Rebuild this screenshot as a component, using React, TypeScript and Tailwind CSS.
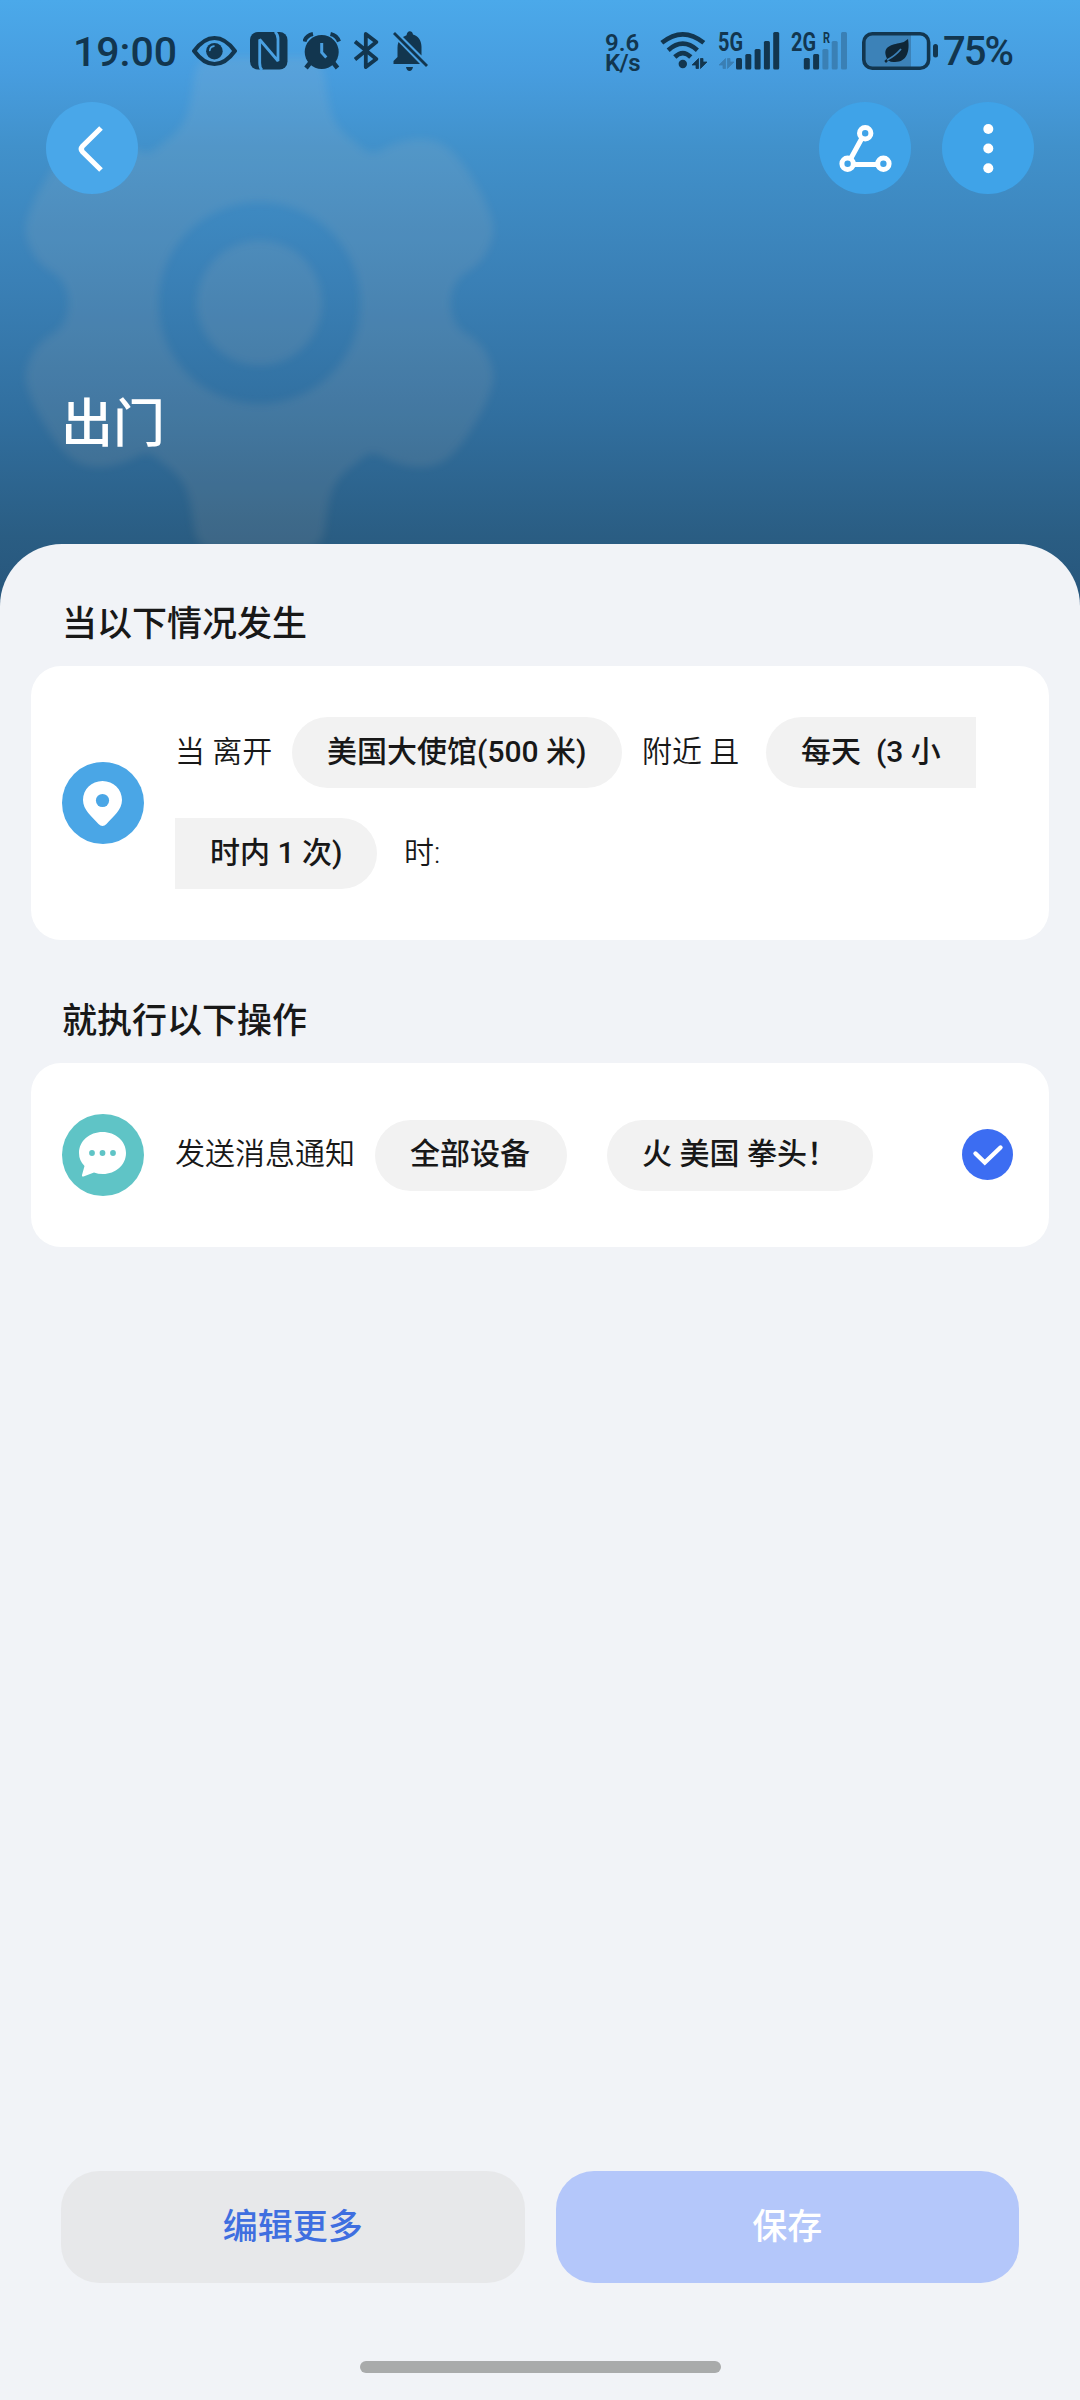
import clsx from "clsx";
import type { ReactNode } from "react";

const INK = "#12364f";

function EyeIcon() {
  return (
    <svg width="45" height="40" viewBox="0 0 45 40" fill="none">
      <path d="M2.2 20C9 10.5 15 7 22.5 7S36 10.5 42.8 20C36 29.5 30 33 22.5 33S9 29.5 2.2 20Z" stroke={INK} strokeWidth="4.2" />
      <circle cx="22.4" cy="20.2" r="8.3" fill={INK} />
      <path d="M17.8 19.5a4.8 4.8 0 0 1 4.2-4.4" stroke="#4aa2e2" strokeWidth="1.6" strokeLinecap="round" />
    </svg>
  );
}

function NfcIcon() {
  return (
    <svg width="38" height="40" viewBox="0 0 38 40" fill="none">
      <rect y="1" width="37.5" height="37.5" rx="8" fill={INK} />
      <path d="M12 39C10 37 9.7 35 9.7 32V8.500L28 30V8C28 5 27.500 3 25 .8" stroke="#4aa1e2" strokeWidth="2.8" strokeLinejoin="bevel" />
    </svg>
  );
}

function AlarmIcon() {
  return (
    <svg width="38" height="40" viewBox="0 0 38 40" fill="none">
      <circle cx="18.7" cy="21" r="17" fill={INK} />
      <path d="M1.5 10.5Q3 4.5 10 3M27.5 3Q34 4.5 36 10.5" stroke={INK} strokeWidth="4" />
      <path d="M7 32l-4 5M30.5 32l4 5" stroke={INK} strokeWidth="4.5" />
      <path d="M18.7 12v9.500l4.600 5" stroke="#4a9fe0" strokeWidth="3" />
    </svg>
  );
}

function BluetoothIcon() {
  return (
    <svg width="26" height="40" viewBox="0 0 26 40" fill="none" stroke={INK} strokeWidth="3.8" strokeLinejoin="round">
      <path d="M1 10.5L22.3 28L11.8 36V3L22.3 11L1 28.5" />
    </svg>
  );
}

function BellOffIcon() {
  return (
    <svg width="36" height="40" viewBox="0 0 36 40" fill="none">
      <path d="M13.5 4.2Q14.3 .3 16.8 .3T20 3.500C25.500 5 28.500 10 28.500 16V24.500L10 6Z" fill={INK} />
      <path d="M5.5 11L27 33H.5V30L4.500 26V17Q4.500 13.500 5.500 11Z" fill={INK} />
      <path d="M1 2L34 35" stroke={INK} strokeWidth="2.8" />
      <path d="M13 36h7q-.8 4-3.500 4T13 36Z" fill={INK} />
    </svg>
  );
}

function DataArrows({ x, color }: { x: number; color: string }) {
  return (
    <path
      transform={`translate(${x} 27.500)`}
      d="M6.500 0V10H4V6.500H0ZM8.500 10V0H11V3.500H15Z"
      fill={color}
      stroke={color}
      strokeWidth="0.8"
      strokeLinejoin="round"
    />
  );
}

function WifiIcon() {
  return (
    <svg width="48" height="40" viewBox="0 0 48 40" fill="none">
      <g stroke={INK} strokeWidth="4.6">
        <path d="M1.8 11.8Q22.8-5.2 43.800 11.800" />
        <path d="M8.2 19.2Q22.8 6.2 37.4 19.2" />
        <path d="M14.8 26Q22.8 18.2 30.8 26" />
      </g>
      <circle cx="22.8" cy="33" r="4.2" fill={INK} />
      <DataArrows x={32} color={INK} />
    </svg>
  );
}

const BARS = [
  { y: 27, h: 11.5 },
  { y: 23, h: 15.5 },
  { y: 18, h: 20.5 },
  { y: 10, h: 28.5 },
  { y: 1, h: 37.5 },
];

function Signal({ label, active, roaming }: { label: string; active: number; roaming?: boolean }) {
  return (
    <svg width="62" height="40" viewBox="0 0 62 40" className="overflow-visible">
      <text x="0" y="19.5" fontSize="25" fontWeight="700" fill={INK} textLength="25" lengthAdjust="spacingAndGlyphs">{label}</text>
      {roaming ? (
        <text x="32" y="11.5" fontSize="14" fontWeight="700" fill={INK} textLength="7" lengthAdjust="spacingAndGlyphs">R</text>
      ) : (
        <DataArrows x={1} color="#3a7fb4" />
      )}
      {BARS.map((b, i) => (
        <rect key={i} x={(roaming ? 12.8 : 18) + i * 9.3} y={b.y} width="6" height={b.h} rx="1.5" fill={i < active ? INK : "#3a80b5"} />
      ))}
    </svg>
  );
}

function BatteryIcon() {
  return (
    <svg width="77" height="40" viewBox="0 0 77 40" fill="none">
      <path d="M9 3H49V37H9Q2 37 2 30V10Q2 3 9 3Z" fill="#3c82b8" />
      <rect x="1.8" y="2.8" width="64.8" height="34.5" rx="8.5" stroke={INK} strokeWidth="3.6" />
      <rect x="71" y="13" width="5" height="13.5" rx="2.5" fill={INK} />
      <path d="M46 8C48 20 45 31 33 31Q29 31.500 26.500 29.500L24 32L22.300 30L25 27.500C19 15 31 13.500 38 12Q43 11 46 8Z" fill="#0f2636" />
      <path d="M25 29Q33 25 39 18" stroke="#3c82b8" strokeWidth="1.8" />
    </svg>
  );
}

function StatusBar() {
  return (
    <div className="flex h-[102px] items-center pl-[73px] pr-[66px] text-[#12364f]">
      <span className="w-[119px] pt-[2px] text-[41px] font-medium leading-none">19:00</span>
      <EyeIcon />
      <div className="ml-[13px]"><NfcIcon /></div>
      <div className="ml-[15px]"><AlarmIcon /></div>
      <div className="ml-[13px]"><BluetoothIcon /></div>
      <div className="ml-[13px]"><BellOffIcon /></div>
      <div className="ml-auto flex items-center">
        <div className="w-[55px] pt-[3px] text-[24px] font-semibold leading-[20px]">
          <p>9.6</p>
          <p className="tracking-[-0.6px]">K/s</p>
        </div>
        <WifiIcon />
        <div className="ml-[10px]"><Signal label="5G" active={5} /></div>
        <div className="ml-[11px]"><Signal label="2G" active={2} roaming /></div>
        <div className="ml-[9px]"><BatteryIcon /></div>
        <span className="ml-[4px] w-[71px] whitespace-nowrap pt-[2px] text-[40px] font-medium leading-none tracking-[-2px]">75%</span>
      </div>
    </div>
  );
}

function GearBackdrop() {
  return (
    <svg className="absolute left-0 top-0 h-[600px] w-[520px] blur-[4px]" viewBox="0 0 520 600">
      <defs>
        <path
          id="gear-side"
          d="M0-246H48Q64-244 66-222C69-198 72-186 77-179Q84-168 97-160C106-151 112-149 118-151Q138-163 158-164Q180-165 194-150Q205-138 212-126Q230-98 234-76Q234-60 223-44Q214-34 204-29Q191-18 191 0Q191 18 204 29Q214 34 223 44Q234 60 234 76Q230 98 212 126Q205 138 194 150Q180 165 158 164Q138 163 118 151C112 149 106 151 97 160Q84 168 77 179C72 186 69 198 66 222Q64 244 48 246H0V101A101 101 0 0 0 0-101Z"
        />
      </defs>
      <g transform="translate(259.5 303)" fill="#ffd8b4" fillOpacity="0.092">
        <use href="#gear-side" />
        <use href="#gear-side" transform="scale(-1 1)" />
        <circle r="62.5" />
      </g>
    </svg>
  );
}

function RoundButton({ className, children }: { className?: string; children: ReactNode }) {
  return (
    <button className={clsx("flex size-[92px] items-center justify-center rounded-full", className)}>
      {children}
    </button>
  );
}

function NavBar() {
  return (
    <div className="flex items-center px-[46px]">
      <RoundButton className="bg-[#49a7e9]">
        <svg width="92" height="92" viewBox="0 0 92 92" fill="none" stroke="#fff" strokeWidth="5.2">
          <path d="M55 26L36.5 44.2Q34 47 36.500 49.800L55 68" />
        </svg>
      </RoundButton>
      <RoundButton className="ml-auto bg-[#3fa3e8]">
        <svg width="92" height="92" viewBox="0 0 92 92" fill="none" stroke="#fff" strokeWidth="5">
          <circle cx="46.2" cy="31.2" r="5.7" />
          <circle cx="28.6" cy="61.7" r="5.7" />
          <circle cx="64.4" cy="61.7" r="5.7" />
          <path d="M43 36L31.8 56.5M34.5 62.5H58.5" />
        </svg>
      </RoundButton>
      <RoundButton className="ml-[31px] bg-[#3fa3e8]">
        <svg width="92" height="92" viewBox="0 0 92 92" fill="#fff">
          <circle cx="46.3" cy="27" r="5" />
          <circle cx="46.3" cy="46.5" r="5" />
          <circle cx="46.3" cy="66.3" r="5" />
        </svg>
      </RoundButton>
    </div>
  );
}

function Pill({ className, children }: { className?: string; children: ReactNode }) {
  return (
    <span className={clsx("flex h-[71px] items-center whitespace-pre bg-[#f2f2f2] pb-[3px] pl-[35px] font-medium", className)}>
      {children}
    </span>
  );
}

function Label({ className, children }: { className?: string; children: ReactNode }) {
  return <span className={clsx("pb-[3px] font-[350]", className)}>{children}</span>;
}

function LocationIcon() {
  return (
    <svg width="82" height="82" viewBox="0 0 82 82" className="shrink-0">
      <circle cx="41" cy="41" r="41" fill="#4aa6e6" />
      <path d="M40.5 19C51.500 19 60 27.500 60 38C60 48 51 54.500 44.500 62Q40.500 66 36.500 62C30 54.500 21 48 21 38C21 27.500 29.500 19 40.500 19Z" fill="#fff" />
      <circle cx="40.5" cy="38.5" r="6.6" fill="#4aa6e6" />
    </svg>
  );
}

function MessageIcon() {
  return (
    <svg width="82" height="82" viewBox="0 0 82 82" className="shrink-0">
      <circle cx="41" cy="41" r="41" fill="#5fc4c6" />
      <path d="M40.5 18C53.500 18 64 27 64 39C64 51 53.500 60 41 60Q36 60 32 58.500L21.500 62.500Q19.500 63 20 61L22.500 52Q17 46.500 17 39C17 27 27.500 18 40.500 18Z" fill="#fff" />
      <g fill="#5fc4c6">
        <circle cx="30" cy="39" r="2.9" />
        <circle cx="40.5" cy="39" r="2.9" />
        <circle cx="51" cy="39" r="2.9" />
      </g>
    </svg>
  );
}

function CheckIcon() {
  return (
    <svg width="51" height="51" viewBox="0 0 51 51" fill="none">
      <circle cx="25.5" cy="25.5" r="25.5" fill="#3c6df2" />
      <path d="M13.5 24.5L22.8 33.5L38.5 18.5" stroke="#fff" strokeWidth="4.4" strokeLinecap="round" />
    </svg>
  );
}

function SectionTitle({ children }: { children: ReactNode }) {
  return <h2 className="pl-[62px] text-[35px] font-medium leading-[50px]">{children}</h2>;
}

export default function App() {
  return (
    <div className="relative flex h-[2400px] w-[1080px] flex-col overflow-hidden bg-[#f1f3f7] font-[Roboto,'Noto_Sans_CJK_SC',sans-serif] text-[#181818]">
      <header className="relative h-[610px] shrink-0 bg-linear-[180deg,#4ba9ea_0%,#479ddf_12%,#4191cb_24%,#3a80b6_46%,#316f9f_68%,#2a5d83_88%,#27557b_100%]">
        <GearBackdrop />
        <div className="relative">
          <StatusBar />
          <NavBar />
          <h1 className="mt-[193px] pl-[61px] text-[52px] font-medium leading-[76px] text-white">出门</h1>
        </div>
      </header>

      <main className="relative -mt-[66px] flex grow flex-col rounded-t-[62px] bg-[#f1f3f7] pt-[56px]">
        <SectionTitle>当以下情况发生</SectionTitle>
        <section className="mx-[31px] mt-[16px] flex h-[274px] items-center rounded-[30px] bg-white pl-[31px] text-[30px]">
          <LocationIcon />
          <div className="ml-[31px] flex flex-col gap-[30px]">
            <div className="flex items-center">
              <Label className="w-[117px]">当 离开</Label>
              <Pill className="w-[330px] rounded-full">美国大使馆(500 米)</Pill>
              <Label className="ml-[20px] w-[124px]">附近 且</Label>
              <Pill className="w-[210px] rounded-l-full">{"每天  (3 小"}</Pill>
            </div>
            <div className="flex items-center">
              <Pill className="w-[202px] rounded-r-full">时内 1 次)</Pill>
              <Label className="ml-[27px]">时:</Label>
            </div>
          </div>
        </section>

        <div className="h-[57px]" />
        <SectionTitle>就执行以下操作</SectionTitle>
        <section className="mx-[31px] mt-[16px] flex h-[184px] items-center rounded-[30px] bg-white pl-[31px] pr-[36px] text-[30px]">
          <MessageIcon />
          <Label className="ml-[31px] w-[200px]">发送消息通知</Label>
          <Pill className="w-[192px] rounded-full">全部设备</Pill>
          <Pill className="ml-[40px] w-[266px] rounded-full">火 美国 拳头！</Pill>
          <div className="ml-auto pb-[2px]"><CheckIcon /></div>
        </section>

        <footer className="mt-auto">
          <div className="flex gap-[31px] px-[61px] text-[35px] font-medium">
            <button className="h-[112px] flex-1 rounded-[38px] bg-[#e7e8ea] pt-[3px] text-[#3f6fe0]">编辑更多</button>
            <button className="h-[112px] flex-1 rounded-[38px] bg-[#b4c7fa] pt-[3px] text-white">保存</button>
          </div>
          <div className="mx-auto mb-[27px] mt-[78px] h-[12px] w-[361px] rounded-full bg-[#a9abab]" />
        </footer>
      </main>
    </div>
  );
}
